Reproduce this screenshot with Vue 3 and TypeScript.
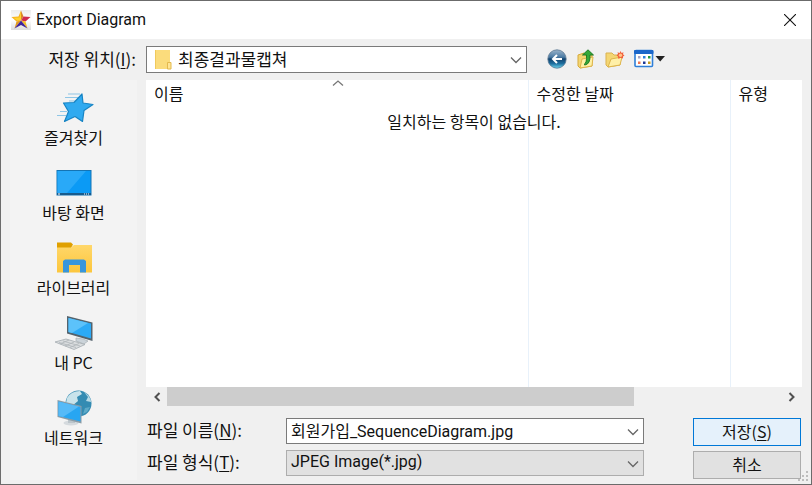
<script setup lang="ts">
import { ref } from 'vue'

interface Place {
  id: string
  label: string
}

const places: Place[] = [
  { id: 'quick', label: '즐겨찾기' },
  { id: 'desktop', label: '바탕 화면' },
  { id: 'library', label: '라이브러리' },
  { id: 'pc', label: '내 PC' },
  { id: 'network', label: '네트워크' },
]

const folder = ref('최종결과물캡쳐')
const fileName = ref('회원가입_SequenceDiagram.jpg')
const fileType = ref('JPEG Image(*.jpg)')
const thumbPercent = 76
</script>

<template>
  <main class="dialog">
    <header class="titlebar">
      <svg class="logo" viewBox="0 0 20 20" aria-hidden="true">
        <defs>
          <linearGradient id="logoBg" x1="0" y1="0" x2="0" y2="1">
            <stop offset="0" stop-color="#ececec" />
            <stop offset="0.5" stop-color="#ffffff" />
            <stop offset="1" stop-color="#dcdcdc" />
          </linearGradient>
        </defs>
        <rect width="20" height="20" fill="url(#logoBg)" />
        <path d="M10 .5 7.500 6.500 .5 7 5.500 11.500 10 10.500Z" fill="#f5b01c" />
        <path d="M10 .5 12.500 6.500 10 10.500Z" fill="#d9862a" />
        <path d="M12.500 6.500 19.500 7 14.500 11.500 10 10.500Z" fill="#cf2b4e" />
        <path d="M5.500 11.500 10 10.500 3.500 18.500Z" fill="#e39a1e" />
        <path d="M10 10.500 14.500 11.500 16.500 18.500Z" fill="#f4bc24" />
        <path d="M10 10.500 16.500 18.500 10 15 3.500 18.500Z" fill="#3f2399" />
        <path d="M10 1.500 8.500 7.500 2.500 7.800l4 3L10 10Z" fill="#ffd22e" />
      </svg>
      <h1>Export Diagram</h1>
      <button class="close" type="button" aria-label="닫기">
        <svg viewBox="0 0 12 12"><path d="M0 0 12 12M12 0 0 12" fill="none" stroke="#111" stroke-width="1.1" /></svg>
      </button>
    </header>

    <div class="lookin">
      <label for="folder">저장 위치(<u>I</u>):</label>
      <div class="combo">
        <svg class="folder" viewBox="0 0 17 20" aria-hidden="true">
          <path d="M0 0H15V12H16V19H0Z" fill="#fbdc7c" />
          <path d="M0 0H1V19H0Z" fill="#f0c95c" />
          <path d="M12.500 19V12.500H16V19Z" fill="#ffe596" stroke="#e3b94d" stroke-width="1" />
        </svg>
        <select id="folder" v-model="folder" class="with-icon">
          <option>최종결과물캡쳐</option>
        </select>
        <svg class="chevron" viewBox="0 0 12 8" aria-hidden="true"><path d="M1 1.500 6 6.500 11 1.500" /></svg>
      </div>
      <nav class="tools" aria-label="탐색">
        <button type="button" aria-label="뒤로">
          <svg width="20" height="20" viewBox="0 0 20 20">
            <defs>
              <linearGradient id="ball" x1="0" y1="0" x2="0" y2="1">
                <stop offset="0" stop-color="#9bb4ca" />
                <stop offset="0.4" stop-color="#4b7aa3" />
                <stop offset="0.5" stop-color="#12436f" />
                <stop offset="0.75" stop-color="#1e6f9f" />
                <stop offset="1" stop-color="#6bd6ee" />
              </linearGradient>
            </defs>
            <circle cx="10" cy="10" r="9.200" fill="url(#ball)" stroke="#5b7690" stroke-width="0.800" />
            <path d="M15 10H6.500M10 6 6 10 10 14" fill="none" stroke="#fff" stroke-width="2" />
          </svg>
        </button>
        <button type="button" aria-label="상위 폴더">
          <svg width="20" height="20" viewBox="0 0 20 20">
            <path d="M2 6 8 4 9 6 16 5V17L4 19 2 17Z" fill="#f4d673" stroke="#d6a93b" />
            <path d="M4 19 6 10 17 8 16 17Z" fill="#fff0a4" stroke="#deb54b" />
            <path d="M8 15.500Q11 14 10.500 6H6.500L12 .8 17.500 6H14Q14.500 15 9 16Z" fill="#35a83a" stroke="#18751f" stroke-width="0.900" />
          </svg>
        </button>
        <button type="button" aria-label="새 폴더">
          <svg width="20" height="20" viewBox="0 0 20 20">
            <path d="M1 4H7L9 6H15V16L3 18 1 16Z" fill="#f4d673" stroke="#dab150" />
            <path d="M3 18 6 10 17 8 15 16Z" fill="#fff0a8" stroke="#deb54b" />
            <path d="M15.500 2 16.600 4 18.500 3.300 18 5.300 19.500 6.500 18 7.500 18 9.500 15.500 8.700 13.500 10 13 7.500 11.500 6.500 13 5 12.500 3.300 14.600 4Z" fill="#f2603a" />
            <circle cx="15.500" cy="6.300" r="1.700" fill="#ffc48a" />
          </svg>
        </button>
        <button type="button" aria-label="보기 메뉴">
          <svg width="32" height="20" viewBox="0 0 32 20">
            <rect x="1" y="1.500" width="17.500" height="16" rx="1" fill="#fff" stroke="#2f7fd8" stroke-width="1.600" />
            <rect x="0" y="1" width="19.500" height="4" rx="1" fill="#1b67ca" />
            <rect x="4" y="7" width="2.500" height="2.500" fill="#aaa6c2" />
            <rect x="9" y="7" width="2.500" height="2.500" fill="#2b80dc" />
            <rect x="14" y="7" width="2.500" height="2.500" fill="#239b3c" />
            <rect x="4" y="12.500" width="2.500" height="2.500" fill="#ef7552" />
            <rect x="9" y="12.500" width="2.500" height="2.500" fill="#1b3796" />
            <rect x="14" y="12.500" width="2.500" height="2.500" fill="#c29a1b" />
            <path d="M21.500 7H31L26.200 12.500Z" fill="#222" />
          </svg>
        </button>
      </nav>
    </div>

    <div class="content">
      <nav class="places" aria-label="위치">
        <button v-for="place in places" :key="place.id" type="button" class="place">
          <svg v-if="place.id === 'quick'" viewBox="0 0 40 36" aria-hidden="true">
            <path d="M14 4H26M11 7.500H24M15 11H22M6 21.500H13M3 25.500H12" stroke="#8fc6e6" stroke-width="1.200" />
            <path d="M28 4 29 13 39 14.500 30 20.500 28.500 31.500 21 26.500 10.500 31.500 14.500 21.500 9.500 13 20 12.500Z" fill="#30aaf0" stroke="#1784c4" stroke-width="1.200" stroke-linejoin="round" />
          </svg>
          <svg v-else-if="place.id === 'desktop'" viewBox="0 0 40 36" aria-hidden="true">
            <rect x="3" y="5.500" width="34" height="24.500" fill="#0b9af5" stroke="#1474b4" />
            <path d="M3.500 6H32L13 28H3.500Z" fill="#29a9f8" />
            <path d="M3 29H37" stroke="#175b8d" stroke-width="2" />
            <path d="M4 29H6M30 29H31M32 29H33M34 29H35" stroke="#fff" />
          </svg>
          <svg v-else-if="place.id === 'library'" viewBox="0 0 40 36" aria-hidden="true">
            <defs>
              <linearGradient id="lib" x1="0" y1="0" x2="0" y2="1">
                <stop offset="0" stop-color="#ffd76a" />
                <stop offset="1" stop-color="#fcc63c" />
              </linearGradient>
            </defs>
            <path d="M3 2.500H17L19 4.500 17 8H3Z" fill="#e0a000" />
            <path d="M3 7.500H17L20 5H38V32.500H3Z" fill="url(#lib)" />
            <path d="M9 32.500V21L11 19.500H30L32 21V32.500H26V25H15V32.500Z" fill="#3796dc" />
          </svg>
          <svg v-else-if="place.id === 'pc'" viewBox="0 0 40 36" aria-hidden="true">
            <path d="M22 23 29 24 34 26 30 29 22 26Z" fill="#cbd3d9" stroke="#a8b0b5" stroke-width="0.700" />
            <path d="M13 1 38.500 7.500V26L13 18.500Z" fill="#54636d" />
            <path d="M14.500 3 37 8.500V23.500L14.500 17Z" fill="#2caaf6" />
            <path d="M14.500 3 34 8 18 18 14.500 17Z" fill="#5cc2fa" />
            <path d="M1 27 12 24 31 29.500 20 34.500Z" fill="#dadddf" stroke="#a5acb1" stroke-width="0.800" />
            <path d="M5 27.500 22 32.500M9 26 26 31M6 29 15 25M11 31 20 27M16 32.500 25 28.500" stroke="#aeb5b9" stroke-width="0.800" />
          </svg>
          <svg v-else viewBox="0 0 40 36" aria-hidden="true">
            <circle cx="24.500" cy="13.500" r="13" fill="#348bb2" />
            <path d="M13 8Q17 1 26 1L28 4 23 7 24 11 18 16 12 13Z" fill="#c8e3eb" />
            <path d="M30 2Q37 7 37 12L32 11 34 7Z" fill="#b6d9e5" />
            <path d="M31 18 36 17 33 22 29 24Z" fill="#5eaac8" />
            <ellipse cx="17" cy="33" rx="7.500" ry="2.500" fill="#d5dade" />
            <path d="M14 27H21V33H14Z" fill="#bcc5cb" />
            <path d="M3.500 10 27.500 16V33.500L3.500 27Z" fill="#8b9ca6" />
            <path d="M4.500 11.500 26.500 17V31.500L4.500 26Z" fill="#27a6f2" />
            <path d="M4.500 11.500 25 16.500 9 27 4.500 26Z" fill="#55baf7" />
          </svg>
          <span>{{ place.label }}</span>
        </button>
      </nav>

      <section class="panel">
        <div class="list">
          <svg class="sort" viewBox="0 0 12 6" aria-hidden="true"><path d="M1 5.500 6 1 11 5.500" fill="none" stroke="#777" stroke-width="1.300" /></svg>
          <table>
            <colgroup>
              <col class="col-name" />
              <col class="col-date" />
              <col />
            </colgroup>
            <thead>
              <tr><th>이름</th><th>수정한 날짜</th><th>유형</th></tr>
            </thead>
            <tbody>
              <tr><td></td><td></td><td></td></tr>
            </tbody>
          </table>
          <p class="empty">일치하는 항목이 없습니다.</p>
        </div>
        <div class="scroll">
          <button type="button" aria-label="왼쪽으로"><svg viewBox="0 0 8 10"><path d="M6.500 1 2.500 5 6.500 9" /></svg></button>
          <div class="track"><div class="thumb" :style="{ width: thumbPercent + '%' }"></div></div>
          <button type="button" aria-label="오른쪽으로"><svg viewBox="0 0 8 10"><path d="M1.500 1 5.500 5 1.500 9" /></svg></button>
        </div>

        <form class="fields" @submit.prevent>
          <div class="entries">
            <label for="filename">파일 이름(<u>N</u>):</label>
            <div class="combo">
              <input id="filename" v-model="fileName" type="text" />
              <svg class="chevron" viewBox="0 0 12 8" aria-hidden="true"><path d="M1 1.500 6 6.500 11 1.500" /></svg>
            </div>
            <label for="filetype">파일 형식(<u>T</u>):</label>
            <div class="combo">
              <select id="filetype" v-model="fileType" class="grey">
                <option>JPEG Image(*.jpg)</option>
              </select>
              <svg class="chevron" viewBox="0 0 12 8" aria-hidden="true"><path d="M1 1.500 6 6.500 11 1.500" /></svg>
            </div>
          </div>
          <div class="actions">
            <button class="action primary" type="submit">저장(<u>S</u>)</button>
            <button class="action" type="button">취소</button>
          </div>
        </form>
      </section>
    </div>
    <svg class="grip" viewBox="0 0 12 12" aria-hidden="true">
      <path d="M9 1h2v2H9zM9 5h2v2H9zM9 9h2v2H9zM5 5h2v2H5zM5 9h2v2H5zM1 9h2v2H1z" fill="#bdbdbd" />
    </svg>
  </main>
</template>

<style>
body {
  background: #f0f0f0;
}
</style>

<style scoped>
* {
  box-sizing: border-box;
}
.dialog {
  position: relative;
  display: flex;
  flex-direction: column;
  min-height: 100vh;
  border: 1px solid #6b6b6b;
  background: #f0f0f0;
  color: #111;
  font: 16px/20px 'Noto Sans CJK KR', sans-serif;
}
button,
input,
select {
  margin: 0;
  padding: 0;
  border: 0;
  background: none;
  color: inherit;
  font: inherit;
}
svg {
  display: block;
}
u {
  text-underline-offset: 2px;
}
.titlebar {
  display: flex;
  align-items: center;
  height: 38px;
  padding: 0 15px 0 10px;
  background: #fff;
}
.logo {
  width: 20px;
  height: 20px;
}
h1 {
  flex: 1;
  margin: 0 0 0 5px;
  font: 16px/20px Roboto, sans-serif;
}
.close svg {
  width: 12px;
  height: 12px;
}
.lookin {
  display: flex;
  align-items: center;
  height: 41px;
}
label {
  font-size: 17px;
}
.lookin label {
  width: 145px;
  padding: 0 10px 2px 0;
  text-align: right;
}
.lookin .combo {
  flex: 1;
}
.tools {
  display: flex;
  gap: 9px;
  width: 284px;
  padding: 0 0 2px 20px;
}
.combo {
  position: relative;
  height: 27px;
}
.combo input,
.combo select {
  display: block;
  width: 100%;
  height: 100%;
  padding: 0 26px 2px 4px;
  border: 1px solid #7a7a7a;
  border-radius: 0;
  background: #fff;
  appearance: none;
}
.combo input,
.combo .grey {
  font-family: Roboto, 'Noto Sans CJK KR', sans-serif;
}
.combo .with-icon {
  padding-left: 31px;
  font-size: 17px;
}
.combo .grey {
  border-color: #adadad;
  background: #e1e1e1;
}
.folder {
  position: absolute;
  top: 4px;
  left: 9px;
  width: 17px;
  height: 20px;
}
.chevron {
  position: absolute;
  top: 10px;
  right: 5px;
  width: 12px;
  height: 8px;
  fill: none;
  stroke: #666;
  stroke-width: 1.3;
  pointer-events: none;
}
.content {
  display: flex;
  flex: 1;
  padding: 0 9px 4px;
}
.places {
  width: 127px;
  margin-right: 9px;
  padding-top: 10px;
  background: #f3f3f3;
}
.place {
  display: flex;
  flex-direction: column;
  align-items: center;
  width: 100%;
  height: 75px;
}
.place svg {
  width: 40px;
  height: 36px;
}
.place span {
  line-height: 22px;
}
.panel {
  display: flex;
  flex: 1;
  flex-direction: column;
  min-width: 0;
}
.list {
  position: relative;
  display: grid;
  flex: 1;
  background: #fff;
}
table {
  width: 100%;
  height: 100%;
  border-collapse: collapse;
  table-layout: fixed;
}
.col-name {
  width: 382px;
}
.col-date {
  width: 202px;
}
th {
  height: 26px;
  padding: 0 8px;
  font-weight: 400;
  text-align: left;
}
th,
td {
  border-right: 1px solid #e8f1fa;
}
th:last-child,
td:last-child {
  border-right: 0;
}
.sort {
  position: absolute;
  top: 0;
  left: 186px;
  width: 12px;
  height: 6px;
}
.empty {
  position: absolute;
  top: 31px;
  left: 0;
  width: 100%;
  margin: 0;
  text-align: center;
}
.scroll {
  display: flex;
  height: 19px;
}
.scroll button {
  display: grid;
  width: 21px;
  place-items: center;
}
.scroll svg {
  width: 8px;
  height: 10px;
  fill: none;
  stroke: #505050;
  stroke-width: 2;
}
.track {
  flex: 1;
}
.thumb {
  height: 100%;
  background: #cdcdcd;
}
.fields {
  display: flex;
  align-items: flex-start;
  gap: 49px;
  padding: 12px 1px 1px;
}
.entries {
  display: grid;
  flex: 1;
  grid-template-columns: 139px 1fr;
  gap: 6px 0;
}
.entries label {
  line-height: 24px;
}
.entries .combo {
  height: 26px;
}
.actions {
  display: grid;
  width: 108px;
  gap: 5px;
}
.action {
  height: 28px;
  padding-bottom: 2px;
  border: 1px solid #adadad;
  background: #e1e1e1;
}
.action.primary {
  border-color: #0078d7;
  background: #e5f1fb;
}
.grip {
  position: absolute;
  right: 2px;
  bottom: 2px;
  width: 12px;
  height: 12px;
}
</style>
